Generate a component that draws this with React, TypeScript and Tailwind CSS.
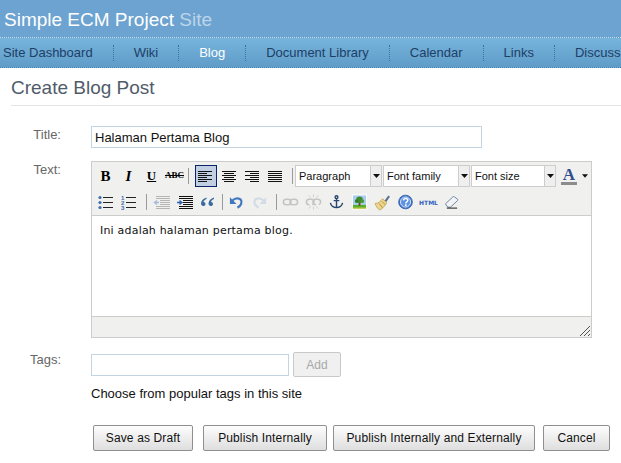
import React from "react";

const Sep = () => <div className="w-px h-[16px] bg-[#9a9a9a] mx-[2px] shrink-0" />;

const Btn = ({ children, active = false, w = "w-[23px]" }: { children: React.ReactNode; active?: boolean; w?: string }) => (
  <div className={`${w} h-[22px] shrink-0 flex items-center justify-center ${active ? "bg-[#c2cfe3] border border-[#0a246a]" : ""}`}>{children}</div>
);

const Lines = ({ kind, size = 15 }: { kind: "l" | "c" | "r" | "j"; size?: number }) => {
  const rows = [0, 1, 2, 3, 4, 5].map((i) => {
    const short = i % 2 === 1;
    let x = 0;
    let w = 14;
    if (short && kind === "l") w = 9;
    if (short && kind === "c") { x = 2; w = 10; }
    if (short && kind === "r") { x = 5; w = 9; }
    return <rect key={i} x={x} y={3 + i * 2} width={w} height={1} fill="#111" />;
  });
  return <svg width={size} height="16" viewBox={`0 0 ${size} 16`} shapeRendering="crispEdges">{rows}</svg>;
};

const Bullets = ({ num = false }: { num?: boolean }) => (
  <svg width="15" height="16" viewBox="0 0 15 16">
    {[3, 8, 13].map((y, i) => (
      <g key={y}>
        {num ? (
          <text x="0" y={y + 2.5} fontSize="6" fontWeight="bold" fill="#3f6cab" fontFamily="Liberation Sans, sans-serif">{i + 1}</text>
        ) : (
          <circle cx="2" cy={y + 0.5} r="1.6" fill="#3f6cab" />
        )}
        <rect x="5" y={y} width="10" height="1" fill="#222" />
      </g>
    ))}
  </svg>
);

const Indent = ({ out = false }: { out?: boolean }) => {
  const ink = out ? "#b5b5b5" : "#111";
  return (
    <svg width="17" height="16" viewBox="0 0 17 16" shapeRendering="crispEdges">
      {[2, 4, 6, 8, 10, 12, 14].map((y, i) => (
        <rect key={y} x={i > 1 && i < 5 ? 7 : 3} y={y} width={i > 1 && i < 5 ? 10 : 14} height={1} fill={ink} />
      ))}
      <path d={out ? "M6 8.500H2M4 6.500L1.500 8.500 4 10.500" : "M1 8.500H5M3.500 6.500L6 8.500 3.500 10.500"} stroke={out ? "#a8bcd8" : "#2f62a8"} strokeWidth="1.400" fill="none" shapeRendering="auto" />
    </svg>
  );
};

const Quote = () => (
  <svg width="15" height="16" viewBox="0 0 15 16" fill="#3b6aa0">
    <path d="M6.500 3.500C3.500 4.500 1 6.500 1 9.500c0 1.600 1 2.500 2.300 2.500 1.200 0 2.200-.9 2.200-2.100 0-1.100-.8-2-2-2 .3-1.200 1.500-2.400 3-3zM14 3.500c-3 1-5.500 3-5.500 6 0 1.600 1 2.500 2.300 2.500 1.200 0 2.200-.9 2.200-2.100 0-1.100-.8-2-2-2 .3-1.200 1.500-2.400 3-3z" />
  </svg>
);

const Undo = ({ redo = false }: { redo?: boolean }) => (
  <svg width="15" height="16" viewBox="0 0 16 16" style={redo ? { transform: "scaleX(-1)" } : undefined}>
    <path d="M3 7.500C5 4 10 3 12.500 5.500 14.500 8 13 12 9 14" fill="none" stroke={redo ? "#d3dbe4" : "#3f78bf"} strokeWidth="2.400" />
    <path d="M1 3v7h7z" fill={redo ? "#d3dbe4" : "#3f78bf"} />
  </svg>
);

const Chain = ({ broken = false }: { broken?: boolean }) => (
  <svg width="17" height="16" viewBox="0 0 18 16" fill="none" stroke="#c4c4c4" strokeWidth="1.600">
    <rect x="1.500" y="5" width="8" height="6" rx="3" strokeDasharray={broken ? "10 3" : undefined} />
    <rect x="8.500" y="5" width="8" height="6" rx="3" strokeDasharray={broken ? "10 3" : undefined} />
    {broken && <path d="M9 0v3M9 13v3M4 1l2 2.500M14 1l-2 2.500M4 15l2-2.500M14 15l-2-2.500" strokeWidth="0.800" />}
  </svg>
);

const Anchor = () => (
  <svg width="15" height="16" viewBox="0 0 16 16" fill="none" stroke="#27466f" strokeWidth="1.500">
    <circle cx="8" cy="2.800" r="1.500" />
    <path d="M8 4.500V14M5 6.500h6M1.500 9c.5 3 3.500 5 6.500 5s6-2 6.500-5" />
  </svg>
);

const Picture = () => (
  <svg width="15" height="16" viewBox="0 0 16 16">
    <rect width="16" height="16" fill="#fff" />
    <rect x="1" y="1" width="14" height="10" fill="#a9cdf0" />
    <rect x="1" y="11" width="14" height="4" fill="#58b030" />
    <rect x="7" y="8" width="2" height="4" fill="#6a4a20" />
    <circle cx="8" cy="5.500" r="3.500" fill="#3f8a2c" />
    <circle cx="5" cy="7" r="2" fill="#357d26" />
    <circle cx="11" cy="7" r="2" fill="#4c9a33" />
    <rect x="1" y="14" width="14" height="1" fill="#e6c93a" />
  </svg>
);

const Broom = () => (
  <svg width="17" height="17" viewBox="0 0 16 16">
    <path d="M10 6l3.500-4.500 1.500 1.200L11.500 7.500z" fill="#5a6f8a" />
    <path d="M1 9c3 0 5-2 7-4.500l4 3.500c-1.500 3-4 6-6.500 7-1 0-3.500-3-4.500-6z" fill="#ecd68b" stroke="#b89a4c" strokeWidth="0.700" />
    <path d="M5 9l3 4M7.500 7l3 3" stroke="#a8873c" strokeWidth="0.800" />
  </svg>
);

const Help = () => (
  <svg width="15" height="16" viewBox="0 0 16 16">
    <circle cx="8" cy="8" r="7.300" fill="#3f74cc" stroke="#24509c" strokeWidth="0.800" />
    <circle cx="8" cy="8" r="5.400" fill="#5d92e4" stroke="#dce8fa" strokeWidth="1" />
    <path d="M5.700 6.300C5.900 4.800 7 4.200 8.100 4.200c1.400 0 2.400.9 2.400 2 0 1.700-2.200 1.700-2.200 3.300" fill="none" stroke="#fff" strokeWidth="1.500" />
    <rect x="7.400" y="10.500" width="1.800" height="1.800" fill="#fff" />
  </svg>
);

const Eraser = () => (
  <svg width="15" height="16" viewBox="0 0 16 16">
    <path d="M1.500 10L9.500 2.500c.5-.4 1.100-.4 1.500 0L14.500 5c.4.400.4 1 0 1.400L7 13.500H4z" fill="#f2f4f6" stroke="#5a7492" strokeWidth="0.900" />
    <path d="M3 14.500h11" stroke="#111" strokeWidth="1" />
  </svg>
);

const Arrow = () => (
  <svg width="7" height="4" viewBox="0 0 7 4"><path d="M0 0h7L3.500 4z" fill="#111" /></svg>
);

const Sel = ({ label, w }: { label: string; w: string }) => (
  <div className={`${w} h-[22px] shrink-0 flex border border-[#cdcdcd] bg-white`}>
    <div className="flex-1 pl-[3px] leading-[20px] text-[11px] text-[#111] font-['Liberation_Sans',sans-serif] whitespace-nowrap overflow-hidden">{label}</div>
    <div className="w-[11px] border-l border-[#cdcdcd] bg-[#efefef] flex items-center justify-center"><Arrow /></div>
  </div>
);

const Label = ({ children, top = "" }: { children: React.ReactNode; top?: string }) => (
  <div className={`w-[61px] mr-[30px] shrink-0 text-right text-[13px] leading-[15px] text-[#666666] ${top}`}>{children}</div>
);

const ActionBtn = ({ children, w }: { children: React.ReactNode; w: string }) => (
  <button className={`${w} h-[26px] shrink-0 border border-[#8f8f8f] rounded-[2px] bg-gradient-to-b from-[#fdfdfd] to-[#dedede] text-[12px] tracking-[0.13px] text-[#111]`}>{children}</button>
);

const nav: [string, string][] = [
  ["Site Dashboard", "text-[#1e3f66]"],
  ["Wiki", "text-[#1e3f66]"],
  ["Blog", "text-white"],
  ["Document Library", "text-[#1e3f66]"],
  ["Calendar", "text-[#1e3f66]"],
  ["Links", "text-[#1e3f66]"],
  ["Discuss", "text-[#1e3f66]"],
];

export default function App() {
  return (
    <div className="w-[621px] h-[463px] overflow-hidden bg-white font-['Liberation_Sans',Arial,sans-serif]">
      <div className="h-[37px] bg-[#6ca3d0] pl-[4px] pt-[9px] text-[19px] leading-[21px] text-white">
        Simple ECM Project <span className="text-[#bdd5e8]">Site</span>
      </div>
      <div className="h-[31px] border-t border-dotted border-[#c9dfee] border-b border-b-[#4a7ea6] bg-gradient-to-b from-[#76b4dc] to-[#5f9cc8] flex items-center whitespace-nowrap text-[13px] pl-[3px] overflow-hidden">
        {nav.map(([t, c], i) => (
          <React.Fragment key={t}>
            {i > 0 && <div className="h-[16px] border-l border-dotted border-[#3f7199] mx-[20px] shrink-0" />}
            <span className={c}>{t}</span>
          </React.Fragment>
        ))}
      </div>

      <div className="ml-[11px] h-[38px] border-b border-[#e3e3e3] pt-[9px] text-[19px] leading-[22px] text-[#515c6b]">Create Blog Post</div>

      <div className="pt-[20px]">
        <div className="flex">
          <Label top="pt-[1px]">Title:</Label>
          <input
            readOnly
            value="Halaman Pertama Blog"
            className="w-[391px] h-[22px] border border-[#c3d5e2] px-[3px] text-[13px] text-[#111] outline-none"
          />
        </div>

        <div className="flex mt-[13px]">
          <Label top="pt-[1px]">Text:</Label>
          <div className="w-[501px] h-[177px] border border-[#cccccc] flex flex-col">
            <div className="h-[54px] bg-[#f0f0ee] border-b border-[#cccccc] pl-[2px] pt-[3px] shrink-0">
              <div className="flex items-center h-[22px]">
                <Btn><span className="font-['Liberation_Serif',serif] font-bold text-[15px]">B</span></Btn>
                <Btn><span className="font-['Liberation_Serif',serif] font-bold italic text-[15px]">I</span></Btn>
                <Btn><span className="font-['Liberation_Serif',serif] font-bold underline text-[13px]">U</span></Btn>
                <Btn><span className="font-['Liberation_Serif',serif] line-through text-[9px] font-bold">ABC</span></Btn>
                <Sep />
                <div className="w-[4px]" />
                <Btn active w="w-[22px]"><Lines kind="l" size={16} /></Btn>
                <div className="w-px" />
                <Btn><Lines kind="c" /></Btn>
                <Btn><Lines kind="r" /></Btn>
                <Btn><Lines kind="j" /></Btn>
                <div className="w-[3px]" />
                <Sep />
                <Sel label="Paragraph" w="w-[87px]" />
                <div className="w-px" />
                <Sel label="Font family" w="w-[87px]" />
                <div className="w-px" />
                <Sel label="Font size" w="w-[85px]" />
                <div className="w-[2px]" />
                <div className="w-[22px] h-[22px] flex flex-col items-center justify-center">
                  <span className="font-['Liberation_Serif',serif] font-bold text-[#2f4f8f] text-[17px] leading-[15px]">A</span>
                  <div className="w-[16px] h-[3px] bg-[#8c8c8c]" />
                </div>
                <div className="w-[8px] pl-[2px] flex items-center"><Arrow /></div>
              </div>
              <div className="flex items-center h-[22px] mt-[4px]">
                <Btn><Bullets /></Btn>
                <Btn><Bullets num /></Btn>
                <div className="w-[4px]" />
                <Sep />
                <div className="w-[1px]" />
                <Btn><Indent out /></Btn>
                <Btn><Indent /></Btn>
                <Btn><Quote /></Btn>
                <div className="w-[1px]" />
                <Sep />
                <Btn><Undo /></Btn>
                <Btn><Undo redo /></Btn>
                <div className="w-[3px]" />
                <Sep />
                <Btn><Chain /></Btn>
                <Btn><Chain broken /></Btn>
                <Btn><Anchor /></Btn>
                <Btn><Picture /></Btn>
                <Btn><Broom /></Btn>
                <Btn><Help /></Btn>
                <Btn><span className="text-[6px] font-bold text-[#2f62c0] font-['DejaVu_Sans',sans-serif]">HTML</span></Btn>
                <Btn><Eraser /></Btn>
              </div>
            </div>
            <div className="flex-1 px-[8px] pt-[8px] text-[11px] tracking-[0.2px] leading-[13px] text-[#111] font-['DejaVu_Sans',sans-serif]">
              Ini adalah halaman pertama blog.
            </div>
            <div className="relative h-[21px] bg-[#f0f0ee] border-t border-[#cccccc] shrink-0">
              <svg className="absolute right-0 bottom-0" width="12" height="12" viewBox="0 0 12 12" stroke="#555" strokeWidth="1">
                <path d="M1 11L11 1M5 11L11 5M9 11L11 9" />
              </svg>
            </div>
          </div>
        </div>

        <div className="flex mt-[14px]">
          <Label>Tags:</Label>
          <div>
            <div className="flex items-center">
              <div className="w-[198px] h-[22px] border border-[#c3d5e2] mt-[1px]" />
              <button className="ml-[4px] w-[48px] h-[25px] border border-[#c9c9c9] rounded-[2px] bg-[#f0f0f0] text-[12px] text-[#a9a9a9]">Add</button>
            </div>
            <div className="mt-[9px] text-[13px] leading-[15px] text-[#111]">Choose from popular tags in this site</div>
          </div>
        </div>

        <div className="flex ml-[93px] mt-[24px]">
          <ActionBtn w="w-[100px]">Save as Draft</ActionBtn>
          <div className="w-[10px]" />
          <ActionBtn w="w-[124px]">Publish Internally</ActionBtn>
          <div className="w-[6px]" />
          <ActionBtn w="w-[202px]">Publish Internally and Externally</ActionBtn>
          <div className="w-[8px]" />
          <ActionBtn w="w-[67px]">Cancel</ActionBtn>
        </div>
      </div>
    </div>
  );
}
